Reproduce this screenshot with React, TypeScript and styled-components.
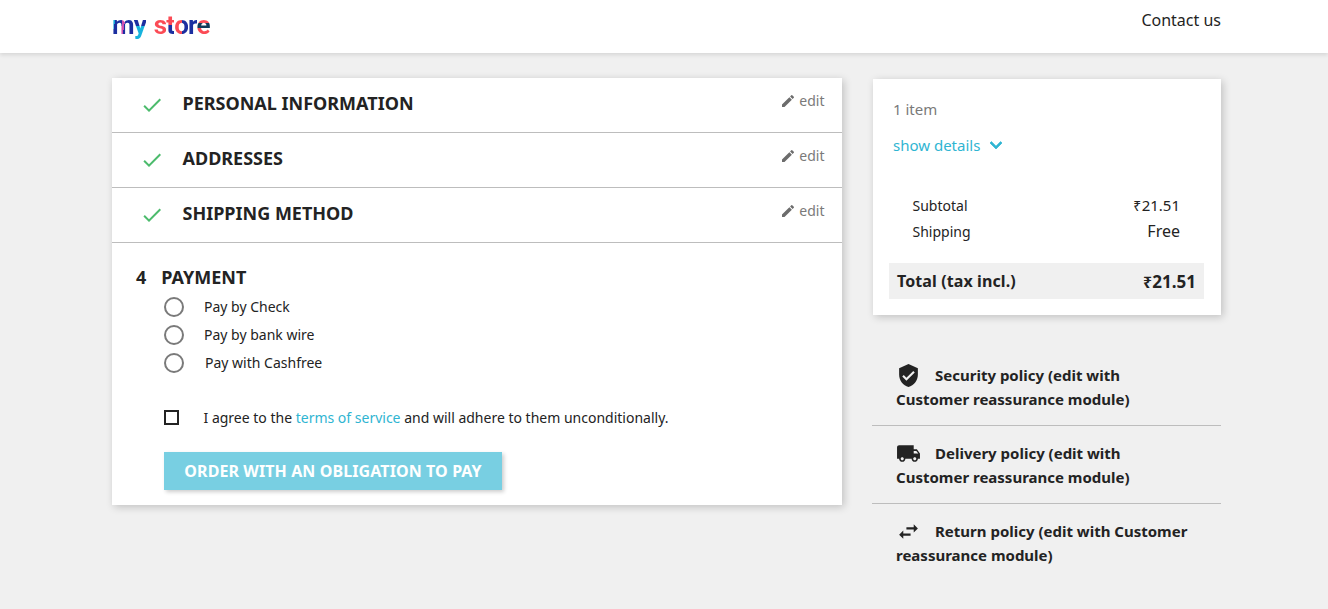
import * as React from 'react';
import styled, { createGlobalStyle } from 'styled-components';
import { MdCheck, MdEdit, MdKeyboardArrowDown, MdVerifiedUser, MdLocalShipping, MdSwapHoriz } from 'react-icons/md';

const Global = createGlobalStyle`
  html, body { margin: 0; padding: 0; }
  body {
    background: #f0f0f0;
    font-family: "Noto Sans", sans-serif;
    color: #232323;
    font-size: 14px;
  }
`;

const Header = styled.header`
  height: 53px;
  background: #fff;
  box-shadow: 0 2px 4px rgba(0, 0, 0, 0.11);
  padding: 0 107px 0 112px;
  display: flex;
  justify-content: space-between;
`;

const Logo = styled.div`
  display: flex;
  height: 49px;
  align-items: center;
  font-family: Roboto, sans-serif;
  font-size: 26px;
  font-weight: 700;
  letter-spacing: -0.9px;
`;

const LogoLetter = styled.span<{ $fill: string; $gap?: number }>`
  background: ${p => p.$fill};
  -webkit-background-clip: text;
  background-clip: text;
  color: transparent;
  margin-right: ${p => p.$gap || 0}px;
`;

const Contact = styled.a`
  font-size: 16px;
  color: #232323;
  line-height: 22px;
  padding-top: 9px;
`;

const Page = styled.main`
  display: flex;
  align-items: flex-start;
  gap: 31px;
  padding: 25px 107px 0 112px;
`;

const Left = styled.section`
  width: 730px;
  background: #fff;
  box-shadow: 2px 2px 8px rgba(0, 0, 0, 0.2);
`;

const Step = styled.div`
  height: 55px;
  box-sizing: border-box;
  border-bottom: 1px solid #bdbdbd;
  display: flex;
  align-items: center;
  padding: 0 17.5px 2px 28px;
  color: #4cbb6c;
  > svg { margin-top: 2px; }
`;

const StepTitle = styled.h1`
  margin: 0 0 2px 18.5px;
  flex: 1;
  font-size: 18px;
  line-height: 24px;
  font-weight: 700;
  color: #232323;
  text-transform: uppercase;
`;

const EditLink = styled.a`
  display: flex;
  align-items: center;
  gap: 3px;
  color: #7a7a7a;
  font-size: 14px;
  line-height: 19px;
  margin-bottom: 7px;
  svg { color: #6c6c6c; }
`;

const PaymentBody = styled.div`
  padding: 22px 0 15px 24px;
`;

const PaymentTitle = styled.h1`
  margin: 0;
  display: flex;
  gap: 15px;
  font-size: 18px;
  line-height: 24px;
  font-weight: 700;
  text-transform: uppercase;
`;

const Options = styled.div`
  display: flex;
  flex-direction: column;
  gap: 8px;
  margin: 8px 0 0 28px;
`;

const Option = styled.label<{ $gap: number }>`
  display: flex;
  align-items: center;
  gap: ${p => p.$gap}px;
  height: 20px;
  line-height: 20px;
`;

const Radio = styled.span`
  width: 20px;
  height: 20px;
  box-sizing: border-box;
  border: 2px solid #7a7a7a;
  border-radius: 50%;
`;

const Agree = styled.div`
  display: flex;
  align-items: center;
  gap: 24.5px;
  margin: 35px 0 0 28px;
  line-height: 19px;
`;

const Box = styled.span`
  width: 15px;
  height: 15px;
  box-sizing: border-box;
  border: 2px solid #232323;
`;

const TermsLink = styled.a`
  color: #2fb5d2;
`;

const OrderButton = styled.button`
  display: block;
  width: 338px;
  height: 38px;
  margin: 25px 0 0 28px;
  padding: 0;
  border: 0;
  background: #78cfe2;
  color: #fff;
  font-family: inherit;
  font-size: 16px;
  font-weight: 700;
  letter-spacing: 0.1px;
  text-transform: uppercase;
  box-shadow: 2px 2px 4px rgba(0, 0, 0, 0.2);
`;

const Right = styled.aside`
  width: 348px;
  margin-top: 1px;
`;

const Summary = styled.div`
  background: #fff;
  box-shadow: 2px 2px 8px rgba(0, 0, 0, 0.2);
  padding: 20px 17px 16px 16px;
  height: 236px;
  box-sizing: border-box;
`;

const Items = styled.div`
  color: #7a7a7a;
  padding-left: 4px;
  line-height: 20px;
  font-size: 15px;
`;

const Details = styled.a`
  display: flex;
  align-items: center;
  gap: 4px;
  margin: 16px 0 0 4px;
  color: #2fb5d2;
  line-height: 20px;
  height: 20px;
  font-size: 15px;
  svg path:last-child { stroke: currentColor; stroke-width: 0.7px; }
`;

const Lines = styled.div`
  margin: 40px 24px 0 23.5px;
  display: flex;
  flex-direction: column;
  gap: 6px;
`;

const Line = styled.div`
  display: flex;
  justify-content: space-between;
  align-items: center;
  height: 20px;
  font-size: 14px;
`;

const LineValue = styled.span<{ $size: number }>`
  font-size: ${p => p.$size}px;
`;

const Rupee = styled.span`
  font-size: 0.92em;
  margin-right: 0.5px;
`;

const Total = styled.div`
  margin-top: 22px;
  height: 36px;
  background: #f0f0f0;
  display: flex;
  justify-content: space-between;
  align-items: center;
  padding: 0 8px;
  font-weight: 700;
  font-size: 16px;
  letter-spacing: 0.1px;
`;

const TotalValue = styled.span`
  font-size: 17px;
  letter-spacing: 0;
`;

const Reassurance = styled.div`
  margin: 33px 0 0 -1px;
`;

const Policy = styled.div<{ $last?: boolean }>`
  padding: 15px 30px 0 24px;
  border-bottom: ${p => (p.$last ? 'none' : '1px solid #bdbdbd')};
  font-size: 15px;
  font-weight: 700;
  line-height: 24px;
  height: 78px;
  box-sizing: border-box;
`;

const PolicyIcon = styled.span`
  display: inline-block;
  width: 39px;
  height: 24px;
  vertical-align: top;
  svg { display: block; }
`;

const policies = [
  { icon: <MdVerifiedUser size={25} />, text: 'Security policy (edit with Customer reassurance module)' },
  { icon: <MdLocalShipping size={25} />, text: 'Delivery policy (edit with Customer reassurance module)' },
  { icon: <MdSwapHoriz size={25} />, text: 'Return policy (edit with Customer reassurance module)' },
];

const steps = ['Personal Information', 'Addresses', 'Shipping Method'];

const App = () => (
  <>
    <Global />
    <Header>
      <Logo>
        <LogoLetter $fill="linear-gradient(100deg, #12a5d8 18%, #1c2fa0 18% 45%, #d04fb0 45% 55%, #1c2fa0 55%)">m</LogoLetter>
        <LogoLetter $fill="linear-gradient(180deg, #1c2fa0 52%, #17b3dd 52%)" $gap={8}>y</LogoLetter>
        <LogoLetter $fill="linear-gradient(#fb4b55, #fb4b55)">s</LogoLetter>
        <LogoLetter $fill="linear-gradient(180deg, #fb4b55 50%, #1c2fa0 50%)">t</LogoLetter>
        <LogoLetter $fill="linear-gradient(90deg, #fb4b55 55%, #1c2fa0 55%)">o</LogoLetter>
        <LogoLetter $fill="linear-gradient(#1c2fa0, #1c2fa0)">r</LogoLetter>
        <LogoLetter $fill="linear-gradient(180deg, #fb4b55 42%, #103a5a 42% 60%, #fb4b55 60%)">e</LogoLetter>
      </Logo>
      <Contact>Contact us</Contact>
    </Header>
    <Page>
      <Left>
        {steps.map(step => (
          <Step key={step}>
            <MdCheck size={24} />
            <StepTitle>{step}</StepTitle>
            <EditLink><MdEdit size={16} />edit</EditLink>
          </Step>
        ))}
        <PaymentBody>
          <PaymentTitle><span>4</span><span>Payment</span></PaymentTitle>
          <Options>
            <Option $gap={20}><Radio />Pay by Check</Option>
            <Option $gap={20}><Radio />Pay by bank wire</Option>
            <Option $gap={21}><Radio />Pay with Cashfree</Option>
          </Options>
          <Agree>
            <Box />
            <span>I agree to the <TermsLink>terms of service</TermsLink> and will adhere to them unconditionally.</span>
          </Agree>
          <OrderButton>Order with an obligation to pay</OrderButton>
        </PaymentBody>
      </Left>
      <Right>
        <Summary>
          <Items>1 item</Items>
          <Details>show details <MdKeyboardArrowDown size={24} /></Details>
          <Lines>
            <Line><span>Subtotal</span><LineValue $size={15}><Rupee>₹</Rupee>21.51</LineValue></Line>
            <Line><span>Shipping</span><LineValue $size={16}>Free</LineValue></Line>
          </Lines>
          <Total><span>Total (tax incl.)</span><TotalValue><Rupee>₹</Rupee>21.51</TotalValue></Total>
        </Summary>
        <Reassurance>
          {policies.map((policy, index) => (
            <Policy key={policy.text} $last={index === policies.length - 1}>
              <PolicyIcon>{policy.icon}</PolicyIcon>
              {policy.text}
            </Policy>
          ))}
        </Reassurance>
      </Right>
    </Page>
  </>
);

export default App;
